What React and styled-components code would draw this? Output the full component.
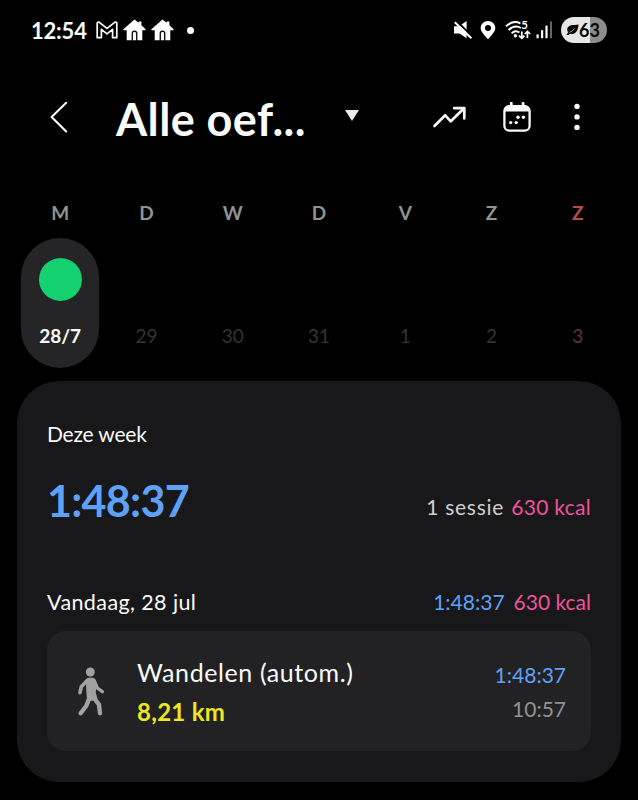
import React from 'react';
import styled, { createGlobalStyle } from 'styled-components';

const days = [
  { id: 1, letter: "M", date: "28/7", active: true },
  { id: 2, letter: "D", date: "29" },
  { id: 3, letter: "W", date: "30" },
  { id: 4, letter: "D", date: "31" },
  { id: 5, letter: "V", date: "1" },
  { id: 6, letter: "Z", date: "2" },
  { id: 7, letter: "Z", date: "3", sunday: true },
];

// status bar icons
const MailIcon = () => (
  <svg width="22" height="18" viewBox="0 0 22 18" fill="none" stroke="#fff" strokeWidth="1.7" strokeLinejoin="round">
    <path d="M1.2 16.7V2.2Q1.6 0.8 3 1.2L11 7.4L19 1.2Q20.6 0.8 20.8 2.2V16.7H16.6V8.4L11 12.8L5.4 8.4V16.7Z" />
  </svg>
);

const HouseIcon = () => (
  <svg width="23" height="22" viewBox="0 0 23 22" fill="#fff">
    <path d="M11.5 0.4L15.6 3.8V2.4H18.4V6.2L22.6 10.2V11.2H19.3V21.2H14.4V14.2Q14.2 11.4 11.5 11.4Q8.8 11.4 8.6 14.2V21.2H3.7V11.2H0.4V10.2Z" />
    <path d="M9.9 21.2V14.4Q10 12.8 11.5 12.8Q13 12.8 13.1 14.4V21.2Z" />
  </svg>
);

const MuteIcon = () => (
  <svg width="22" height="20" viewBox="0 0 22 20">
    <path d="M1 6.2H6.2L13.6 1V18.2L6.6 13.6H1Z" fill="#fff" />
    <path d="M3 0.6L19.4 16.4" stroke="#000" strokeWidth="2" />
    <path d="M1.8 2.2L18.4 18.2" stroke="#fff" strokeWidth="2" />
  </svg>
);

const PinIcon = () => (
  <svg width="20" height="20" viewBox="0 0 20 20">
    <path d="M8 1C3.9 1 0.7 4 0.7 7.9C0.7 11.7 4.2 14.6 8 19.2C11.8 14.6 15.3 11.7 15.3 7.9C15.3 4 12.1 1 8 1ZM8 5A3 3 0 1 1 8 11A3 3 0 0 1 8 5Z" fill="#fff" />
  </svg>
);

const WifiIcon = () => (
  <svg width="26" height="28" viewBox="0 -4 26 28" fill="none" stroke="#fff" strokeWidth="1.9">
    <path d="M1 6.4Q8 -0.4 15.4 3.4" />
    <path d="M3.6 10Q9.4 4.4 16 8" />
    <path d="M6.6 13.2Q10.6 9.6 14.4 12.6" />
    <circle cx="10.4" cy="15.8" r="1.7" fill="#fff" stroke="none" />
    <path d="M16.8 11.6V18M14 15.6L16.8 18.4L19.4 15.6" strokeWidth="1.7" />
    <path d="M22.4 18V11.6M19.8 14L22.4 11.4L25.2 14" strokeWidth="1.7" />
    <text x="16.2" y="9.2" fill="#fff" stroke="none" fontSize="11.5" fontWeight="700" fontFamily="Lato, sans-serif">5</text>
  </svg>
);

const SignalIcon = () => (
  <svg width="17" height="18" viewBox="0 0 17 18">
    <rect x="0.5" y="13.4" width="2.2" height="3.8" fill="#fff" />
    <rect x="5" y="9.2" width="2.2" height="8" fill="#fff" />
    <rect x="9.4" y="4.6" width="2.2" height="12.6" fill="#fff" />
    <rect x="14" y="0.4" width="2" height="16.8" fill="#666" />
  </svg>
);

const LeafIcon = () => (
  <svg width="13" height="12" viewBox="0 0 13 12">
    <path d="M12.6 0.4C8 1.2 1.4 0.2 1.2 5.4Q1.2 7.2 2.2 8.3L0.4 11H2.6L4 9.8C9.8 11 12 6.4 12.6 0.4Z" fill="#080808" />
    <path d="M3.6 8.4Q6.8 7 8.4 4.4" stroke="#e6e6e6" strokeWidth="0.7" fill="none" />
  </svg>
);

// header icons
const BackIcon = () => (
  <svg width="18" height="32" viewBox="0 0 18 32" fill="none" stroke="#fafafa" strokeWidth="2.1" strokeLinecap="round" strokeLinejoin="round">
    <path d="M16.2 1.8L1.6 16.1L16.2 30.4" />
  </svg>
);

const TrendIcon = () => (
  <svg width="34" height="24" viewBox="0 0 34 24" fill="none" stroke="#fafafa" strokeWidth="2.7" strokeLinecap="round" strokeLinejoin="round">
    <path d="M2.5 21L13.2 10.3L18.8 16.3L32 3.2" />
    <path d="M22.2 3.2H32.3V13.4" />
  </svg>
);

const CalendarIcon = () => (
  <svg width="28" height="30" viewBox="0 0 28 30" fill="#fafafa">
    <rect x="6.9" y="0" width="2.8" height="6" rx="1" />
    <rect x="18.7" y="0" width="2.8" height="6" rx="1" />
    <rect x="1.4" y="4.1" width="25.2" height="24.6" rx="5" fill="none" stroke="#fafafa" strokeWidth="2.3" />
    <path d="M1.4 9.6V8Q1.4 3.4 6 3.4H22Q26.6 3.4 26.6 8V9.6Z" />
    <circle cx="7.7" cy="20.6" r="1.7" />
    <circle cx="13.2" cy="20.6" r="1.7" />
    <circle cx="15" cy="15.3" r="1.7" />
    <circle cx="20.4" cy="15.3" r="1.7" />
  </svg>
);

const MoreIcon = () => (
  <svg width="8" height="28" viewBox="0 0 8 28" fill="#fafafa">
    <circle cx="4" cy="3.4" r="2.7" />
    <circle cx="4" cy="13.9" r="2.7" />
    <circle cx="4" cy="24.4" r="2.7" />
  </svg>
);

const WalkIcon = () => (
  <svg width="28" height="50" viewBox="0 0 84 150" fill="none" stroke="#a1a1a1" strokeLinecap="round" strokeLinejoin="round">
    <circle cx="40" cy="18" r="13.5" fill="#a1a1a1" stroke="none" />
    <path d="M31 41Q41 36 51 41L55 60L52 78L57 98L34 102L32 78Z" fill="#a1a1a1" strokeWidth="8" />
    <path d="M29 45L13 62L9 80" strokeWidth="11" />
    <path d="M52 45L61 66L76 77" strokeWidth="10" />
    <path d="M37 97L28 119L11 142" strokeWidth="13" />
    <path d="M51 96L66 116L69 142" strokeWidth="13" />
  </svg>
);

const App = () => {
  return (
    <>
      <GlobalStyle />
      <Screen>

        <StatusBar>
          <StatusGroup $gap="5px">
            <Clock>12:54</Clock>
            <MailIcon />
            <HouseIcon />
            <HouseIcon />
            <Dot />
          </StatusGroup>
          <StatusGroup $gap="5px">
            <MuteIcon />
            <PinIcon />
            <WifiIcon />
            <SignalIcon />
            <Battery><LeafIcon />63</Battery>
          </StatusGroup>
        </StatusBar>

        <Header>
          <IconButton aria-label="Terug"><BackIcon /></IconButton>
          <Title>Alle oef...</Title>
          <Caret />
          <Actions>
            <IconButton aria-label="Trend"><TrendIcon /></IconButton>
            <IconButton aria-label="Kalender"><CalendarIcon /></IconButton>
            <IconButton aria-label="Meer"><MoreIcon /></IconButton>
          </Actions>
        </Header>

        {/* week strip */}
        <Week>
          {
            days.map((day) => {
              return (
                <Day key={day.id}>
                  <DayLetter $sunday={day.sunday}>{day.letter}</DayLetter>
                  <DayPill $active={day.active}>
                    {day.active ? <Ring /> : null}
                    <DayDate $active={day.active} $sunday={day.sunday}>{day.date}</DayDate>
                  </DayPill>
                </Day>
              )
            })
          }
        </Week>

        <Card>
          <Text $size="21px" $track="-0.2px">Deze week</Text>
          <TotalRow>
            <Text $size="43px" $weight="700" $color="#5ea2f8" $track="-0.7px">1:48:37</Text>
            <Values $gap="7px">
              <Text $size="21px" $color="#cfcfd0" $track="0.75px">1 sessie</Text>
              <Text $size="21px" $color="#f0529c" $track="0.3px">630 kcal</Text>
            </Values>
          </TotalRow>
          <DayRow>
            <Text $size="21.5px" $track="0.4px">Vandaag, 28 jul</Text>
            <Values $gap="9px">
              <Text $size="21px" $color="#5ea2f8">1:48:37</Text>
              <Text $size="21px" $color="#f0529c">630 kcal</Text>
            </Values>
          </DayRow>
          <Workout>
            <WalkIcon />
            <WorkoutInfo>
              <Text $size="25px" $track="0.6px">Wandelen (autom.)</Text>
              <Text $size="24px" $weight="700" $color="#ece722" $track="0.3px">8,21 km</Text>
            </WorkoutInfo>
            <WorkoutTimes>
              <Text $size="21px" $color="#5ea2f8">1:48:37</Text>
              <Text $size="21px" $color="#929293">10:57</Text>
            </WorkoutTimes>
          </Workout>
        </Card>

      </Screen>
    </>
  )
};

const GlobalStyle = createGlobalStyle`
  * {
    box-sizing: border-box;
    margin: 0;
    padding: 0;
  }

  body {
    background-color: #000;
    font-family: Lato, "Open Sans", sans-serif;
    color: #fafafa;
  }

  svg {
    display: block;
    flex-shrink: 0;
  }
`;

const Screen = styled.main`
  width: 638px;
  height: 800px;
  overflow: hidden;
  background-color: #000;
`;

const StatusBar = styled.div`
  height: 60px;
  padding: 0 31px;
  display: flex;
  align-items: center;
  justify-content: space-between;
`;

const StatusGroup = styled.div`
  display: flex;
  align-items: center;
  gap: ${({ $gap }) => $gap};
`;

const Clock = styled.span`
  width: 60px;
  font-size: 22px;
  font-weight: 700;
  letter-spacing: -0.2px;
`;

const Dot = styled.span`
  width: 7px;
  height: 7px;
  margin-left: 8px;
  border-radius: 50%;
  background-color: #fff;
`;

const Battery = styled.span`
  width: 46px;
  height: 26px;
  margin-left: 3px;
  padding-left: 5px;
  display: flex;
  align-items: center;
  border-radius: 13px;
  background: linear-gradient(90deg, #e6e6e6 29px, #8c8c8c 29px);
  color: #080808;
  font-size: 18px;
  font-weight: 700;
`;

const Header = styled.header`
  height: 114px;
  padding: 0 57px 0 50px;
  display: flex;
  align-items: center;
`;

const IconButton = styled.button`
  border: none;
  background: none;
  color: inherit;
  cursor: pointer;
`;

const Title = styled.h1`
  width: 190px;
  margin-left: 48px;
  padding-top: 3px;
  font-size: 45px;
  font-weight: 700;
  letter-spacing: 0.4px;
  line-height: 60px;
  white-space: nowrap;
`;

const Caret = styled.span`
  margin-left: 39px;
  margin-bottom: 3px;
  border-left: 7.5px solid transparent;
  border-right: 7.5px solid transparent;
  border-top: 11px solid #ececec;
`;

const Actions = styled.div`
  margin-left: auto;
  display: flex;
  align-items: center;
  gap: 37px;

  button:last-child {
    margin-left: 5px;
  }
`;

const Week = styled.section`
  padding: 26px 17px 0;
  display: grid;
  grid-template-columns: repeat(7, 1fr);
`;

const Day = styled.div`
  display: flex;
  flex-direction: column;
  align-items: center;
`;

const DayLetter = styled.span`
  height: 38px;
  font-size: 19px;
  font-weight: 700;
  line-height: 26px;
  color: ${({ $sunday }) => ($sunday ? "#b84c4a" : "#929292")};
`;

const DayPill = styled.div`
  width: 78px;
  height: 130px;
  padding: 20px 0 18px;
  display: flex;
  flex-direction: column;
  align-items: center;
  border-radius: 39px;
  background-color: ${({ $active }) => ($active ? "#252527" : "transparent")};
`;

const Ring = styled.span`
  width: 43px;
  height: 43px;
  border-radius: 50%;
  background-color: #14d06e;
`;

const DayDate = styled.span`
  margin-top: auto;
  font-size: 19px;
  font-weight: ${({ $active }) => ($active ? 700 : 400)};
  line-height: 28px;
  color: ${({ $active, $sunday }) => ($active ? "#fafafa" : $sunday ? "#6c2e2d" : "#343434")};
`;

const Card = styled.section`
  height: 401px;
  margin: 13px 17px 0;
  padding: 38px 30px 31px;
  display: flex;
  flex-direction: column;
  border-radius: 42px;
  background-color: #18181a;
`;

const Text = styled.span`
  font-size: ${({ $size }) => $size};
  font-weight: ${({ $weight }) => $weight || 400};
  color: ${({ $color }) => $color || "#fafafa"};
  letter-spacing: ${({ $track }) => $track || "normal"};
  line-height: 30px;
  white-space: nowrap;
`;

const TotalRow = styled.div`
  height: 60px;
  margin-top: 22px;
  display: flex;
  align-items: center;
  justify-content: space-between;
`;

const Values = styled.div`
  display: flex;
  gap: ${({ $gap }) => $gap};

  ${TotalRow} & {
    padding-top: 12px;
  }
`;

const DayRow = styled.div`
  height: 30px;
  margin-top: 56px;
  display: flex;
  justify-content: space-between;
`;

const Workout = styled.article`
  height: 120px;
  margin-top: 14px;
  padding: 0 25px 0 30px;
  display: flex;
  align-items: center;
  border-radius: 19px;
  background-color: #222224;
`;

const WorkoutInfo = styled.div`
  margin-left: 32px;
  padding-top: 2px;
  display: flex;
  flex-direction: column;
  gap: 10px;
`;

const WorkoutTimes = styled.div`
  margin-left: auto;
  padding-top: 2px;
  display: flex;
  flex-direction: column;
  align-items: flex-end;
  gap: 4px;
`;

export default App;
